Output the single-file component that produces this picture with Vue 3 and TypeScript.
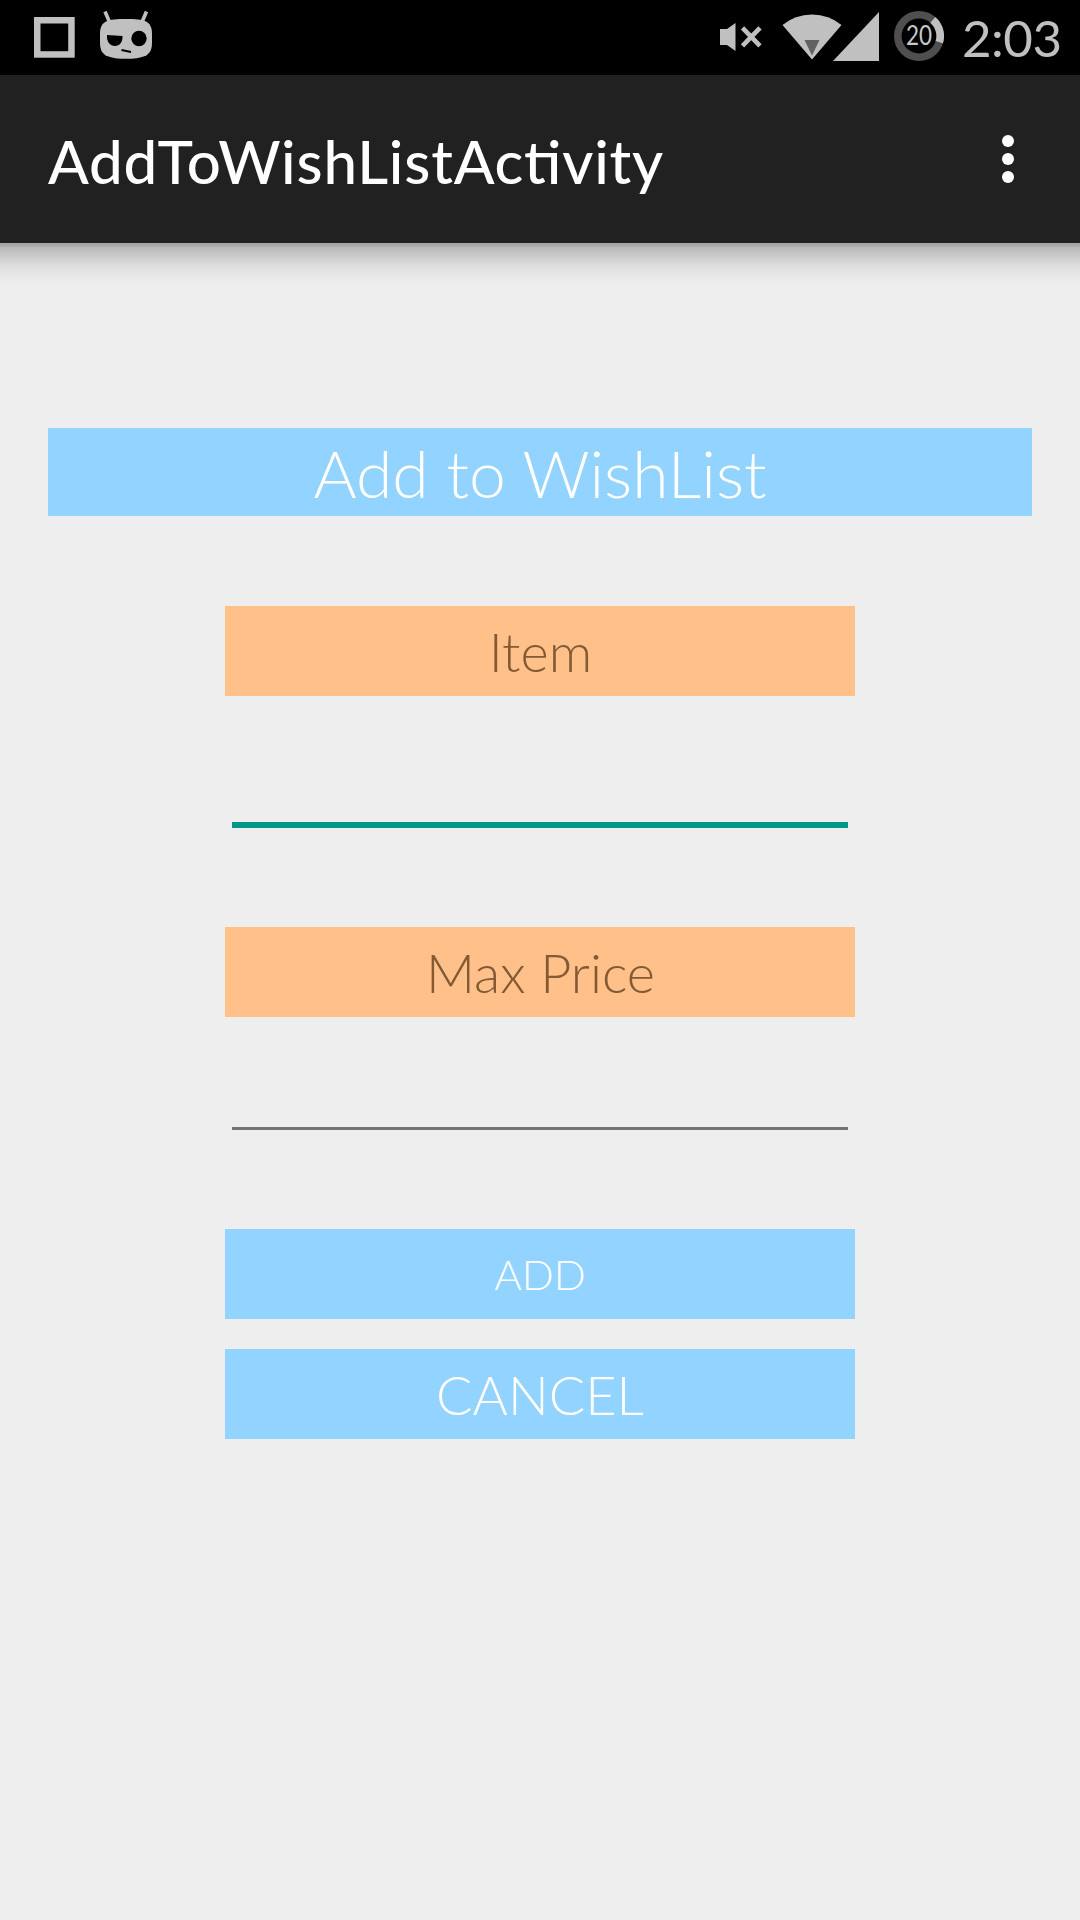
<script setup lang="ts">
import { ref } from 'vue'

const title = 'AddToWishListActivity'
const time = '2:03'
const battery = 20
const item = ref('')
const maxPrice = ref('')
</script>

<template>
  <div class="screen">
    <header class="status">
      <div class="notifications">
        <svg width="41" height="41" viewBox="0 0 41 41"><rect x="3.25" y="3.25" width="34.200" height="34.200" fill="none" stroke="#c0c0c0" stroke-width="6.5" /></svg>
        <svg class="cid" width="52" height="48" viewBox="0 0 52 48">
          <g stroke="#c0c0c0" stroke-width="3.6">
            <path d="M5 0.500 L9.500 11" />
            <path d="M46.500 0.500 L42 11" />
          </g>
          <path d="M26 8 C35 8 42 8.600 45 10 C50 12.500 52 16 52 23 V32 C52 39 49.500 43 45 45 C40 47 34 47.800 26 47.800 C18 47.800 12 47 7 45 C2.500 43 0 39 0 32 V23 C0 16 2 12.500 7 10 C10 8.600 17 8 26 8Z" fill="#c0c0c0" />
          <path d="M7 24 L22.500 25 C23 31 19.500 35 15 35 C10 35 6.500 31 7 24Z" fill="#000" />
          <circle cx="39" cy="27.500" r="7.700" fill="#000" />
          <path d="M21.500 39 L31 41" stroke="#000" stroke-width="2" />
        </svg>
      </div>
      <div class="indicators">
        <svg class="mute" width="42" height="28" viewBox="0 0 42 28">
          <path d="M0 6 H7 L15.500 0 V28 L7 22 H0Z" fill="#c0c0c0" />
          <path d="M22.500 4.800 L40 22.800 M40 4.800 L22.500 22.800" stroke="#c0c0c0" stroke-width="4.600" />
        </svg>
        <svg class="wifi" width="60" height="46" viewBox="0 0 60 46">
          <path d="M0.500 11 Q13 0.500 30 0.500 Q47 0.500 59.500 11 L30 45.500Z" fill="#c0c0c0" />
          <path d="M22.500 26 H37.500 L30 41.500Z" fill="#616161" />
        </svg>
        <svg class="signal" width="46" height="49" viewBox="0 0 46 49"><path d="M46 0 V49 H0Z" fill="#c0c0c0" /></svg>
        <svg class="battery" width="50" height="50" viewBox="0 0 50 50">
          <circle cx="25" cy="25" r="21.200" fill="none" stroke="#4f4f4f" stroke-width="7.600" />
          <path d="M38.800 8.900 A21.200 21.200 0 0 1 45.300 31.200" fill="none" stroke="#c0c0c0" stroke-width="7.600" />
          <text x="25" y="34" text-anchor="middle" textLength="26" lengthAdjust="spacingAndGlyphs">{{ battery }}</text>
        </svg>
        <span class="clock">{{ time }}</span>
      </div>
    </header>

    <nav class="appbar">
      <h1>{{ title }}</h1>
      <button class="overflow" aria-label="More options"><i /><i /><i /></button>
    </nav>

    <main class="content">
      <h2 class="banner">Add to WishList</h2>
      <form class="form" @submit.prevent>
        <label class="label" for="item">Item</label>
        <input id="item" v-model="item" class="field active" type="text" />
        <label class="label" for="price">Max Price</label>
        <input id="price" v-model="maxPrice" class="field" type="text" />
        <button class="action add" type="submit">ADD</button>
        <button class="action" type="button">CANCEL</button>
      </form>
    </main>
  </div>
</template>

<style>
body {
  margin: 0;
  background: #eee;
}
</style>

<style scoped>
.screen {
  width: 1080px;
  height: 1920px;
  overflow: hidden;
  background: #eee;
  font-family: Lato, sans-serif;
}
.status {
  height: 75px;
  box-sizing: border-box;
  padding: 0 20px 0 34px;
  display: flex;
  justify-content: space-between;
  background: #000;
}
.notifications,
.indicators {
  display: flex;
  align-items: flex-start;
}
.notifications {
  padding-top: 17px;
}
.cid {
  margin: -6px 0 0 25px;
}
.mute {
  margin: 23px 20px 0 0;
}
.wifi {
  margin-top: 14px;
}
.signal {
  margin: 12px 15px 0 -9px;
}
.battery {
  margin: 11px 18px 0 0;
}
.battery text {
  font-family: Lato, sans-serif;
  font-size: 27px;
  fill: #c8c8c8;
}
.clock {
  width: 98px;
  line-height: 75px;
  font-size: 51px;
  letter-spacing: -0.5px;
  color: #c0c0c0;
  white-space: nowrap;
}
.appbar {
  height: 168px;
  box-sizing: border-box;
  padding: 0 66px 0 48px;
  display: flex;
  align-items: center;
  justify-content: space-between;
  background: #212121;
}
.appbar h1 {
  margin: 3px 0 0;
  font-size: 60px;
  font-weight: 500;
  letter-spacing: 0.8px;
  font-feature-settings: "liga" 1;
  color: #fff;
}
.overflow {
  padding: 0;
  border: 0;
  background: none;
  display: flex;
  flex-direction: column;
  gap: 6px;
}
.overflow i {
  width: 12px;
  height: 12px;
  border-radius: 50%;
  background: #fff;
}
.content {
  height: 1677px;
  box-sizing: border-box;
  padding: 185px 48px 0;
  background: linear-gradient(#a5a5a5 0, #a8a8a8 3px, #b8b8b8 4px, #c9c9c9 12px, #dadada 21px, #e7e7e7 31px, #eee 43px);
}
.banner {
  height: 88px;
  box-sizing: border-box;
  margin: 0;
  padding-top: 1px;
  line-height: 88px;
  text-align: center;
  font-size: 66px;
  font-weight: 300;
  color: #fff;
  background: #93d3ff;
}
.form {
  width: 630px;
  margin: 90px auto 0;
  display: flex;
  flex-direction: column;
}
.label,
.action {
  height: 90px;
  line-height: 90px;
  text-align: center;
  font-size: 54px;
  font-weight: 300;
}
.label {
  box-sizing: border-box;
  padding: 1px 0 0 1px;
  color: #845a34;
  background: #ffc08a;
}
.field {
  height: 113px;
  box-sizing: border-box;
  margin: 0 7px 99px;
  padding: 0;
  border: 0;
  border-bottom: 3px solid #737373;
  outline: none;
  background: none;
  font: 300 54px Lato, sans-serif;
}
.field.active {
  height: 132px;
  border-bottom: 6px solid #009688;
}
.action {
  padding: 1px 0 0;
  border: 0;
  font-family: inherit;
  color: #fff;
  background: #93d3ff;
}
.action.add {
  margin-bottom: 30px;
  padding-top: 0;
  font-size: 42px;
}
</style>
